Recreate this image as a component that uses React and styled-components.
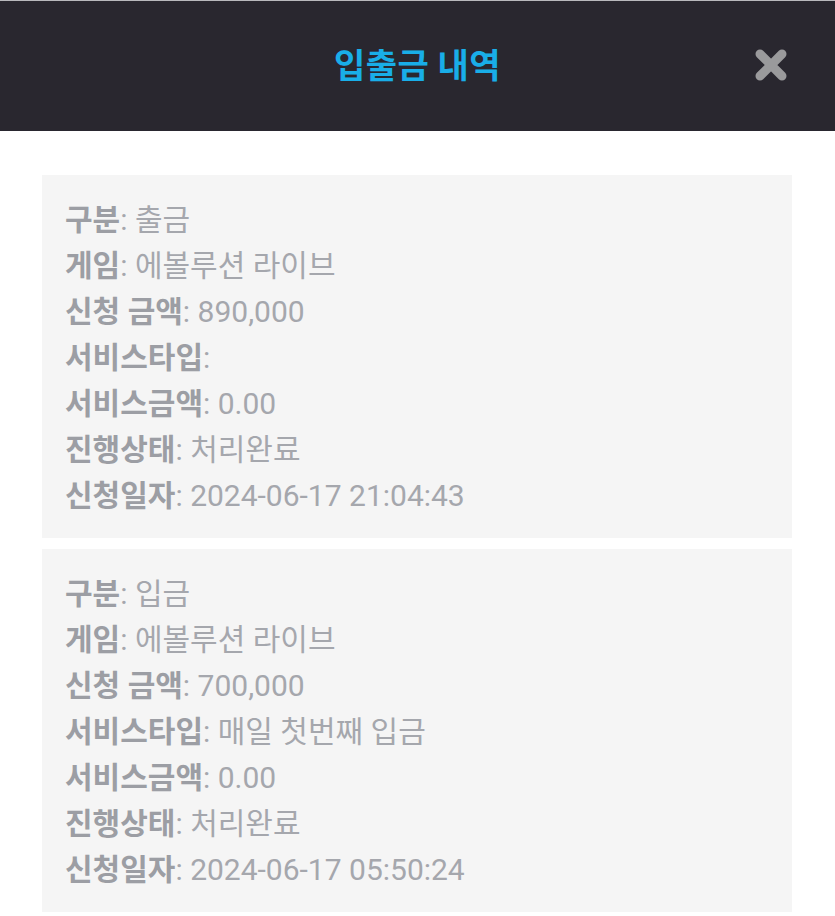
import React from "react";
import styled, { createGlobalStyle } from "styled-components";

const GlobalStyle = createGlobalStyle`
    html, body {
        margin: 0;
        padding: 0;
        background: #ffffff;
    }
    body {
        font-family: Roboto, "Noto Sans CJK KR", "Noto Sans", sans-serif;
    }
`;

const Page = styled.div`
    width: 835px;
    min-height: 916px;
    background: #ffffff;
`;

const Header = styled.header`
    position: relative;
    height: 130px;
    border-top: 1px solid #b9b9bd;
    background: #29272f;
    display: flex;
    align-items: center;
    justify-content: center;
`;

const Title = styled.h1`
    margin: -6px 0 0;
    font-family: "Noto Sans CJK KR", sans-serif;
    font-size: 34px;
    font-weight: 700;
    color: #19aee8;
    letter-spacing: 0.5px;
`;

const CloseBtn = styled.button`
    position: absolute;
    right: 44px;
    top: 50%;
    transform: translateY(-50%);
    width: 40px;
    height: 40px;
    margin-top: -1px;
    padding: 0;
    border: none;
    background: transparent;
    display: flex;
    align-items: center;
    justify-content: center;
    cursor: pointer;
`;

const List = styled.div`
    padding: 44px 43px 0 42px;
    display: flex;
    flex-direction: column;
    gap: 11px;
`;

const Card = styled.div`
    background: #f5f5f5;
    padding: 22px 23px 19px;
`;

const Row = styled.div`
    font-size: 30px;
    line-height: 46px;
    color: #a5a7ad;
    white-space: nowrap;
`;

const Label = styled.span`
    font-weight: 700;
    color: #9c9ea4;
`;

const records = [
    {
        type: "출금",
        game: "에볼루션 라이브",
        amount: "890,000",
        service: "",
        serviceAmount: "0.00",
        status: "처리완료",
        date: "2024-06-17 21:04:43",
    },
    {
        type: "입금",
        game: "에볼루션 라이브",
        amount: "700,000",
        service: "매일 첫번째 입금",
        serviceAmount: "0.00",
        status: "처리완료",
        date: "2024-06-17 05:50:24",
    },
];

function Field({ label, value }) {
    return (
        <Row>
            <Label>{label}</Label>: {value}
        </Row>
    );
}

export default function App() {
    return (
        <Page>
            <GlobalStyle />
            <Header>
                <Title>입출금 내역</Title>
                <CloseBtn aria-label="닫기">
                    <svg width="36" height="36" viewBox="0 0 36 36">
                        <path
                            d="M7 7 L29 29 M29 7 L7 29"
                            stroke="#9a9a9c"
                            strokeWidth="9"
                            strokeLinecap="round"
                        />
                    </svg>
                </CloseBtn>
            </Header>
            <List>
                {records.map((r, i) => (
                    <Card key={i}>
                        <Field label="구분" value={r.type} />
                        <Field label="게임" value={r.game} />
                        <Field label="신청 금액" value={r.amount} />
                        <Field label="서비스타입" value={r.service} />
                        <Field label="서비스금액" value={r.serviceAmount} />
                        <Field label="진행상태" value={r.status} />
                        <Field label="신청일자" value={r.date} />
                    </Card>
                ))}
            </List>
        </Page>
    );
}
